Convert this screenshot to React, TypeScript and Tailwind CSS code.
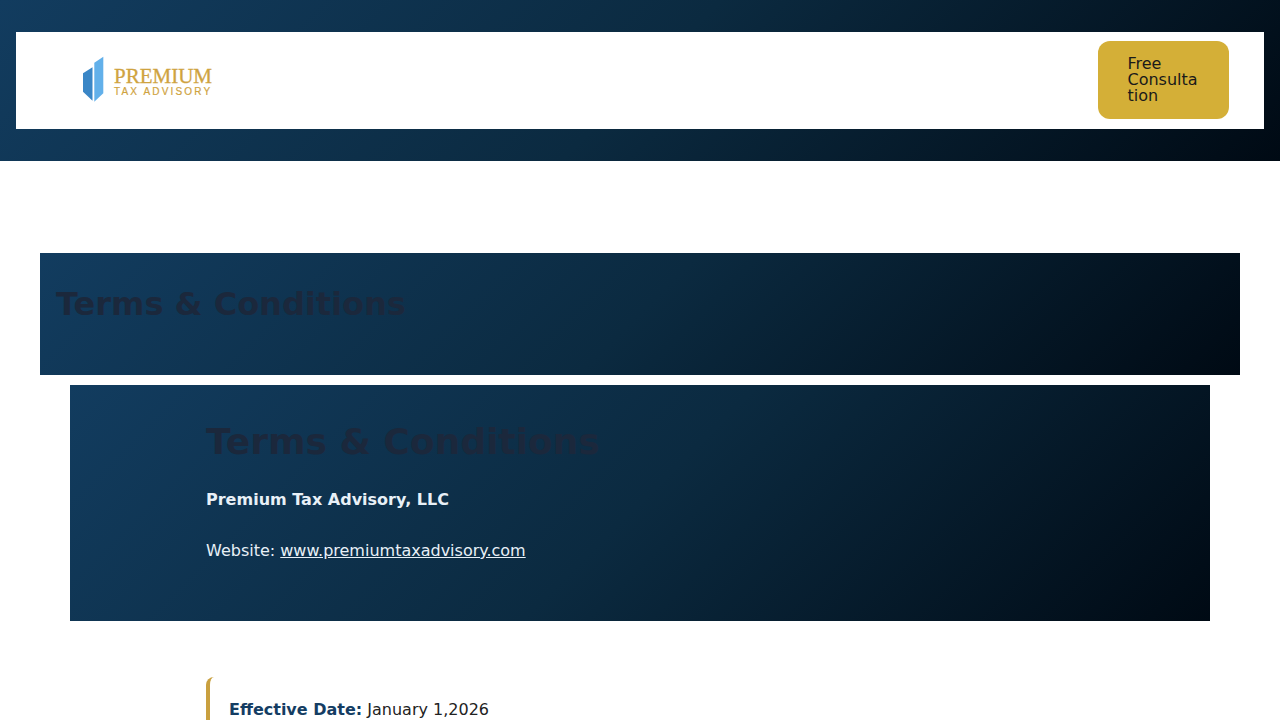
const panel = "bg-[linear-gradient(135deg,#123c5f_0%,#0b2a40_50%,#000a14_100%)]";

function Logo() {
  return (
    <div className="flex items-center gap-[10px] h-[48px] mt-[-1px]">
      <svg width="22" height="48" viewBox="0 0 22 48">
        <path d="M1 18.3 L10.5 12.3 L10.5 45.7 L1 36.7 Z" fill="#3a86c6" />
        <path d="M12.3 7.7 L21.3 1.7 L21.3 38.3 L12.3 46.7 Z" fill="#62b0ea" />
      </svg>
      <div className="flex flex-col text-[#cfa33f] mt-[3px]">
        <span className="font-['Liberation_Serif',serif] text-[21px] leading-[20px] pt-[1px] [-webkit-text-stroke:0.3px_#cfa33f]">PREMIUM</span>
        <span className="font-['Liberation_Sans',sans-serif] text-[10px] leading-[11px] tracking-[2.15px] [-webkit-text-stroke:0.2px_#cfa33f]">TAX ADVISORY</span>
      </div>
    </div>
  );
}

function App() {
  return (
    <div className="h-[720px] overflow-hidden bg-white font-['DejaVu_Sans',sans-serif]">
      <header className={`px-4 py-8 ${panel}`}>
        <div className="bg-white h-[97px] flex items-start justify-between pl-[66px] pr-[35px] pt-[9px]">
          <div className="pt-[15px]">
            <Logo />
          </div>
          <button className="w-[131px] h-[78px] bg-[#d4af37] rounded-[12px] pl-[29.5px] pr-[30px] pb-[1px] text-left text-[16px] leading-[16px] text-[#1a1a1a]">
            Free<br />Consulta<br />tion
          </button>
        </div>
      </header>

      <main className="pt-[92px] flex flex-col items-center">
        <section className={`w-[1200px] h-[122px] px-4 pt-[32px] ${panel}`}>
          <h1 className="text-[32px] leading-[38px] font-bold text-[#1b283c]">Terms &amp; Conditions</h1>
        </section>

        <section className={`w-[1140px] h-[236px] mt-[10px] pl-[136px] pt-[35px] ${panel}`}>
          <h2 className="text-[36px] leading-[43px] font-bold text-[#1b283c]">Terms &amp; Conditions</h2>
          <p className="mt-[25px] text-[16px] leading-[24px] font-bold text-[#e8f0f7]">Premium Tax Advisory, LLC</p>
          <p className="mt-[27px] text-[16px] leading-[24px] text-[#e8f0f7]">
            Website: <a href="#" className="underline">www.premiumtaxadvisory.com</a>
          </p>
        </section>

        <div className="w-[1140px] pl-[136px] mt-[56px]">
          <div className="border-l-4 border-[#c9a03f] rounded-l-[8px] pl-[19px] pt-[21px] pb-5 text-[16px] leading-[24px] text-[#222222]">
            <strong className="text-[#143d63]">Effective Date:</strong> January 1,2026
          </div>
        </div>
      </main>
    </div>
  );
}

export default App;
